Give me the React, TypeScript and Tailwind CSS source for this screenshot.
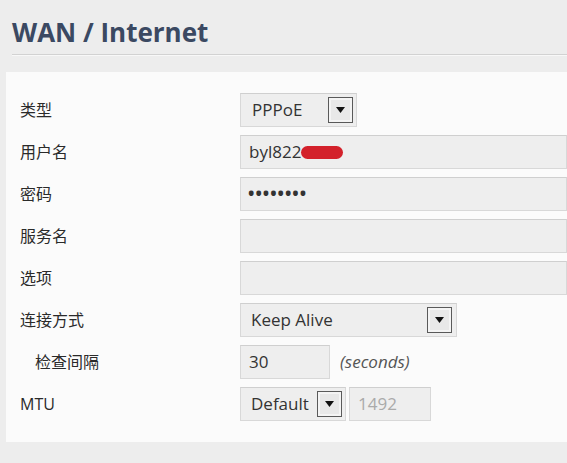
import React from 'react'

const font = { fontFamily: '"Open Sans", "Noto Sans CJK SC", sans-serif' }

function Arrow() {
  return (
    <span className='flex h-[26px] w-[25px] items-center justify-center border border-[#5a5a5a] bg-[#e8e8e8] shadow-[inset_0_0_0_2px_#f4f4f4]'>
      <svg width='9' height='6' viewBox='0 0 9 6'>
        <path d='M0 0 H9 L4.5 6 Z' fill='#111' />
      </svg>
    </span>
  )
}

function Row({ label, indent, children }: { label: string; indent?: boolean; children: React.ReactNode }) {
  return (
    <div className='flex h-[42px] items-center'>
      <div className={'w-[220px] shrink-0 text-[16px] text-[#2a2a2a] ' + (indent ? 'pl-[15px]' : '')}>{label}</div>
      <div className='flex flex-1 items-center'>{children}</div>
    </div>
  )
}

const box = 'flex h-[34px] items-center border border-[#d8d8d8] border-t-[#cfcfcf] bg-[#eeeeee] text-[17px] text-[#333]'

export default function App() {
  return (
    <div className='h-[463px] w-[567px] overflow-hidden bg-[#ededed]' style={font}>
      <div className='pl-[12px] pt-[17px]'>
        <div className='pb-[7px] text-[26px] font-bold leading-[30px] text-[#3b4962]'>WAN / Internet</div>
        <div className='h-[2px] border-t border-[#d2d2d2] bg-[#f8f8f8]' />
      </div>
      <div className='ml-[6px] mt-[16px] bg-[#fbfbfb] pb-[17px] pl-[14px] pt-[17px]'>
        <Row label='类型'>
          <div className={box + ' w-[117px] justify-between pl-[11px] pr-[3px]'}>
            <span>PPPoE</span>
            <Arrow />
          </div>
        </Row>
        <Row label='用户名'>
          <div className={box + ' w-full pl-[8px]'}>
            <span>byl822</span>
            <span className='h-[13px] w-[42px] rounded-full bg-[#d3212b]' />
          </div>
        </Row>
        <Row label='密码'>
          <div className={box + ' w-full pl-[7px] text-[10px] font-bold tracking-[1px]'}>••••••••</div>
        </Row>
        <Row label='服务名'>
          <div className={box + ' w-full'} />
        </Row>
        <Row label='选项'>
          <div className={box + ' w-full'} />
        </Row>
        <Row label='连接方式'>
          <div className={box + ' w-[217px] justify-between pl-[10px] pr-[4px]'}>
            <span>Keep Alive</span>
            <Arrow />
          </div>
        </Row>
        <Row label='检查间隔' indent>
          <div className={box + ' w-[90px] pl-[8px]'}>30</div>
          <span className='ml-[10px] text-[17px] italic text-[#555]'>(seconds)</span>
        </Row>
        <Row label='MTU'>
          <div className={box + ' w-[106px] justify-between pl-[10px] pr-[3px]'}>
            <span>Default</span>
            <Arrow />
          </div>
          <div className={box + ' ml-[3px] w-[82px] pl-[8px] text-[16px] text-[#aaa]'}>1492</div>
        </Row>
      </div>
    </div>
  )
}
